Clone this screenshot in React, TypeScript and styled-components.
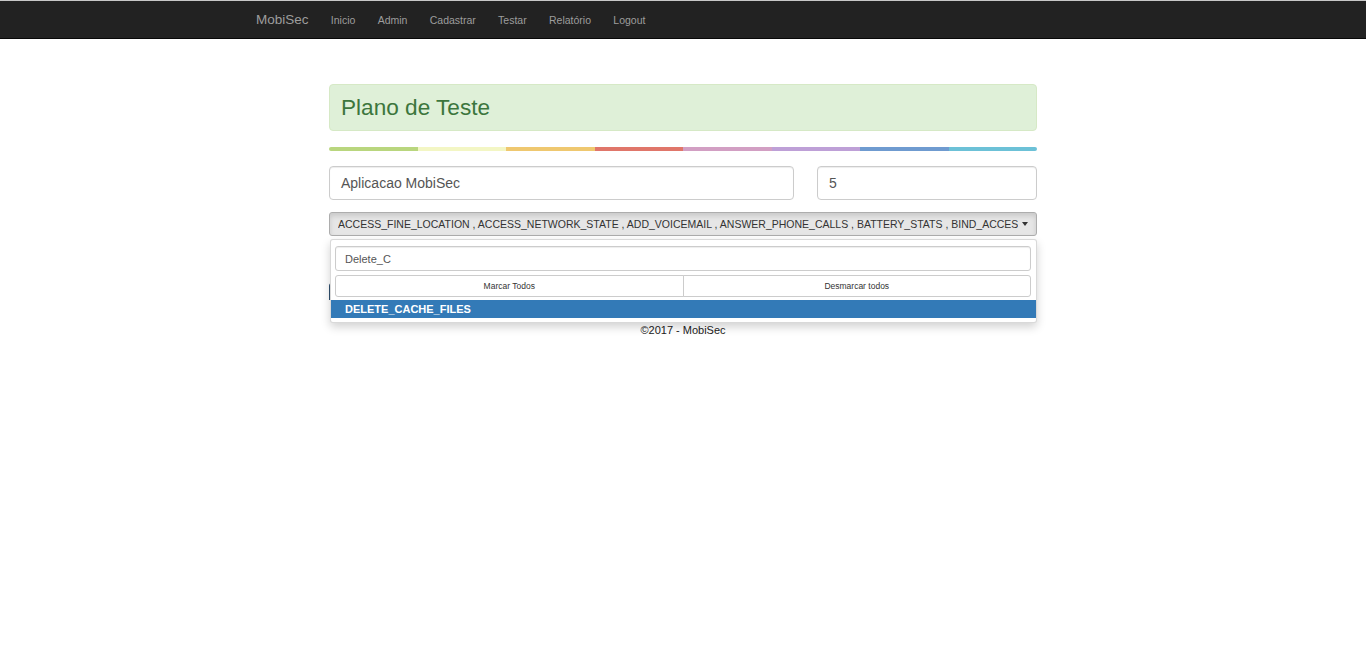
import React from "react";
import styled, { createGlobalStyle } from "styled-components";

const Global = createGlobalStyle`
  html, body { margin: 0; padding: 0; background: #fff; }
  body { font-family: "Liberation Sans", Arial, sans-serif; color: #333; }
  * { box-sizing: border-box; }
`;

const Navbar = styled.nav`
  height: 39px;
  background: #222;
  border-top: 1px solid #c8c8c8;
  border-bottom: 1px solid #080808;
  display: flex;
  align-items: center;
  padding-left: 256px;
  gap: 22.3px;
`;

const Brand = styled.a`
  font-size: 13.5px;
  color: #9d9d9d;
  text-decoration: none;
  margin-top: -1px;
`;

const NavLink = styled.a`
  font-size: 10.5px;
  color: #9d9d9d;
  text-decoration: none;
`;

const Main = styled.main`
  width: 708px;
  margin: 45px auto 0;
  display: flex;
  flex-direction: column;
`;

const Alert = styled.div`
  height: 47px;
  background: #dff0d8;
  border: 1px solid #d6e9c6;
  border-radius: 4px;
  color: #3c763d;
  font-size: 22.6px;
  display: flex;
  align-items: center;
  padding-left: 11px;
`;

const ColorBar = styled.div`
  margin-top: 16px;
  height: 4px;
  border-radius: 2px;
  overflow: hidden;
  display: flex;
`;

const Seg = styled.div<{ $c: string }>`
  flex: 1;
  background: ${(p) => p.$c};
`;

const InputRow = styled.div`
  margin-top: 15px;
  display: flex;
  gap: 23px;
`;

const TextInput = styled.div<{ $w: number }>`
  width: ${(p) => p.$w}px;
  height: 34px;
  border: 1px solid #ccc;
  border-radius: 4px;
  box-shadow: inset 0 1px 1px rgba(0,0,0,.075);
  font-size: 14px;
  color: #555;
  display: flex;
  align-items: center;
  padding-left: 11px;
`;

const SelectWrap = styled.div`
  position: relative;
  margin-top: 12px;
`;

const SelectButton = styled.div`
  height: 24px;
  background: #e6e6e6;
  border: 1px solid #adadad;
  border-radius: 3px;
  box-shadow: inset 0 3px 5px rgba(0,0,0,.125);
  display: flex;
  align-items: center;
  padding: 0 8px 0 8px;
  font-size: 10.5px;
  color: #333;
`;

const SelectText = styled.span`
  flex: 1;
  overflow: hidden;
  white-space: nowrap;
`;

const Caret = styled.span`
  width: 0;
  height: 0;
  margin-left: 4px;
  border-top: 4px solid #333;
  border-left: 3.5px solid transparent;
  border-right: 3.5px solid transparent;
`;

const Menu = styled.div`
  position: absolute;
  top: 27px;
  left: 1px;
  right: 0;
  z-index: 5;
  background: #fff;
  border: 1px solid rgba(0,0,0,.15);
  border-radius: 3px;
  box-shadow: 0 4px 10px rgba(0,0,0,.18);
  padding: 6px 0 4px;
  display: flex;
  flex-direction: column;
`;

const SearchBox = styled.div`
  margin: 0 5px 0 4px;
  height: 25px;
  border: 1px solid #ccc;
  border-radius: 3px;
  font-size: 11px;
  color: #555;
  display: flex;
  align-items: center;
  padding-left: 9px;
  box-shadow: inset 0 1px 1px rgba(0,0,0,.075);
`;

const ActionRow = styled.div`
  margin: 4px 5px 0 4px;
  height: 22px;
  display: flex;
`;

const ActionBtn = styled.div<{ $first?: boolean }>`
  flex: 1;
  border: 1px solid #ccc;
  border-radius: ${(p) => (p.$first ? "3px 0 0 3px" : "0 3px 3px 0")};
  margin-left: ${(p) => (p.$first ? "0" : "-1px")};
  font-size: 8.5px;
  color: #333;
  display: flex;
  align-items: center;
  justify-content: center;
  padding-bottom: 1px;
`;

const Item = styled.div`
  margin-top: 3px;
  height: 18px;
  background: #337ab7;
  color: #fff;
  font-weight: bold;
  font-size: 11px;
  display: flex;
  align-items: center;
  padding-left: 14px;
`;

const SubmitBtn = styled.div`
  margin-top: 47px;
  height: 17px;
  width: 120px;
  background: #2e4f6e;
  border-radius: 3px 3px 0 0;
`;

const Footer = styled.footer`
  margin-top: 23px;
  text-align: center;
  font-size: 11px;
  color: #222;
  line-height: 14px;
`;

const colors = ["#b9d67e", "#f3f6c4", "#efc870", "#e0766a", "#d29fc3", "#bea0d7", "#6f9bd0", "#6cc1d7"];

export default function App() {
  return (
    <>
      <Global />
      <Navbar>
        <Brand>MobiSec</Brand>
        <NavLink>Inicio</NavLink>
        <NavLink>Admin</NavLink>
        <NavLink>Cadastrar</NavLink>
        <NavLink>Testar</NavLink>
        <NavLink>Relatório</NavLink>
        <NavLink>Logout</NavLink>
      </Navbar>
      <Main>
        <Alert>Plano de Teste</Alert>
        <ColorBar>
          {colors.map((c) => (
            <Seg key={c} $c={c} />
          ))}
        </ColorBar>
        <InputRow>
          <TextInput $w={465}>Aplicacao MobiSec</TextInput>
          <TextInput $w={220}>5</TextInput>
        </InputRow>
        <SelectWrap>
          <SelectButton>
            <SelectText>
              ACCESS_FINE_LOCATION , ACCESS_NETWORK_STATE , ADD_VOICEMAIL , ANSWER_PHONE_CALLS , BATTERY_STATS , BIND_ACCESSIBILITY_SERVICE
            </SelectText>
            <Caret />
          </SelectButton>
          <Menu>
            <SearchBox>Delete_C</SearchBox>
            <ActionRow>
              <ActionBtn $first>Marcar Todos</ActionBtn>
              <ActionBtn>Desmarcar todos</ActionBtn>
            </ActionRow>
            <Item>DELETE_CACHE_FILES</Item>
          </Menu>
        </SelectWrap>
        <SubmitBtn />
        <Footer>©2017 - MobiSec</Footer>
      </Main>
    </>
  );
}
